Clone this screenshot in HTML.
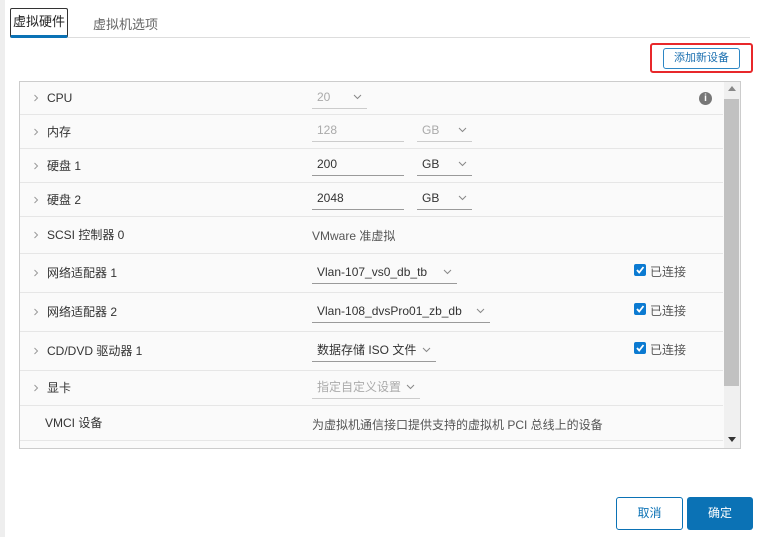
<!DOCTYPE html>
<html><head><meta charset="utf-8"><style>
*{box-sizing:border-box;margin:0;padding:0}
body{width:765px;height:537px;background:#fff;font-family:"Liberation Sans","Noto Sans CJK SC",sans-serif;font-size:12px;color:#333;position:relative;overflow:hidden}
.a{position:absolute}
.strip{left:0;top:0;width:5px;height:537px;background:#eeeeee}
.row{position:absolute;left:20px;width:703px;border-bottom:1px solid #e6e6e6;background:#fafafa}
.lbl{position:absolute;left:27px;top:50%;transform:translateY(-50%);white-space:nowrap;line-height:14px}
.chev{position:absolute;left:12px;top:50%;margin-top:-4px;width:8px;height:8px}
.fld{position:absolute;border-bottom:1px solid #9a9a9a;height:22px;line-height:20px;padding-left:5px;white-space:nowrap}
.dis{color:#aaa;border-bottom-color:#ccc}
.dd{position:absolute;right:5px;top:7px;width:9px;height:6px}
.cb{position:absolute;left:614px;width:12px;height:12px;background:#0b7ad1;border-radius:2px}
.cbl{position:absolute;left:630px;color:#555}
</style></head><body>
<svg width="0" height="0" style="position:absolute"><defs>
<symbol id="r" viewBox="0 0 8 8"><path d="M2.5 1 L5.5 4 L2.5 7" fill="none" stroke="#999" stroke-width="1"/></symbol>
<symbol id="d" viewBox="0 0 9 6"><path d="M1 1 L4.5 4.5 L8 1" fill="none" stroke="#888" stroke-width="1"/></symbol>
<symbol id="c" viewBox="0 0 12 12"><path d="M3 6 L5.2 8.5 L9.5 3" fill="none" stroke="#fff" stroke-width="1.8"/></symbol>
</defs></svg>
<div class="a strip"></div>
<div class="a" style="left:10px;top:8px;width:58px;height:30px;border:1px solid #333;border-radius:2px;border-bottom:3px solid #0b72b5;line-height:26px;text-align:center;font-size:13px;color:#222">虚拟硬件</div>
<div class="a" style="left:93px;top:14px;font-size:13px;color:#666">虚拟机选项</div>
<div class="a" style="left:68px;top:37px;width:682px;height:1px;background:#ddd"></div>
<div class="a" style="left:650px;top:43px;width:103px;height:30px;border:2px solid #e8282b;border-radius:3px"></div>
<div class="a" style="left:663px;top:48px;width:77px;height:21px;border:1px solid #2d86c4;border-radius:3px;line-height:19px;text-align:center;font-size:11px;color:#1a6fb0">添加新设备</div>
<div class="a" style="left:19px;top:81px;width:722px;height:368px;border:1px solid #ccc;background:#fafafa;overflow:hidden"></div>
<div class="row" style="top:82px;height:33px"><svg class="chev"><use href="#r"/></svg><span class="lbl">CPU</span>
<div class="fld dis" style="left:292px;top:5px;width:55px">20<svg class="dd"><use href="#d"/></svg></div>
<div class="a" style="left:679px;top:10px;width:13px;height:13px;border-radius:50%;background:#777;color:#fff;font-size:10px;font-weight:bold;text-align:center;line-height:13px">i</div></div>
<div class="row" style="top:115px;height:34px"><svg class="chev"><use href="#r"/></svg><span class="lbl">内存</span>
<div class="fld dis" style="left:292px;top:5px;width:92px">128</div>
<div class="fld dis" style="left:397px;top:5px;width:55px">GB<svg class="dd"><use href="#d"/></svg></div></div>
<div class="row" style="top:149px;height:34px"><svg class="chev"><use href="#r"/></svg><span class="lbl">硬盘 1</span>
<div class="fld" style="left:292px;top:5px;width:92px">200</div>
<div class="fld" style="left:397px;top:5px;width:55px">GB<svg class="dd"><use href="#d"/></svg></div></div>
<div class="row" style="top:183px;height:34px"><svg class="chev"><use href="#r"/></svg><span class="lbl">硬盘 2</span>
<div class="fld" style="left:292px;top:5px;width:92px">2048</div>
<div class="fld" style="left:397px;top:5px;width:55px">GB<svg class="dd"><use href="#d"/></svg></div></div>
<div class="row" style="top:217px;height:37px"><svg class="chev"><use href="#r"/></svg><span class="lbl">SCSI 控制器 0</span>
<div class="a" style="left:292px;top:10px;color:#555">VMware 准虚拟</div></div>
<div class="row" style="top:254px;height:39px"><svg class="chev"><use href="#r"/></svg><span class="lbl">网络适配器 1</span>
<div class="fld" style="left:292px;top:8px;width:145px">Vlan-107_vs0_db_tb<svg class="dd"><use href="#d"/></svg></div>
<svg class="cb" style="top:10px"><use href="#c"/></svg><div class="cbl" style="top:9px">已连接</div></div>
<div class="row" style="top:293px;height:39px"><svg class="chev"><use href="#r"/></svg><span class="lbl">网络适配器 2</span>
<div class="fld" style="left:292px;top:8px;width:178px">Vlan-108_dvsPro01_zb_db<svg class="dd"><use href="#d"/></svg></div>
<svg class="cb" style="top:10px"><use href="#c"/></svg><div class="cbl" style="top:9px">已连接</div></div>
<div class="row" style="top:332px;height:39px"><svg class="chev"><use href="#r"/></svg><span class="lbl">CD/DVD 驱动器 1</span>
<div class="fld" style="left:292px;top:8px;width:124px">数据存储 ISO 文件<svg class="dd"><use href="#d"/></svg></div>
<svg class="cb" style="top:10px"><use href="#c"/></svg><div class="cbl" style="top:9px">已连接</div></div>
<div class="row" style="top:371px;height:35px"><svg class="chev"><use href="#r"/></svg><span class="lbl">显卡</span>
<div class="fld dis" style="left:292px;top:6px;width:108px">指定自定义设置<svg class="dd"><use href="#d"/></svg></div></div>
<div class="row" style="top:406px;height:35px"><span class="lbl" style="left:25px">VMCI 设备</span>
<div class="a" style="left:292px;top:10px;color:#555">为虚拟机通信接口提供支持的虚拟机 PCI 总线上的设备</div></div>
<div class="a" style="left:724px;top:82px;width:16px;height:366px;background:#f0f0f0"></div>
<div class="a" style="left:724px;top:99px;width:15px;height:287px;background:#c1c1c1"></div>
<div class="a" style="left:728px;top:86px;width:0;height:0;border-left:4px solid transparent;border-right:4px solid transparent;border-bottom:5px solid #888"></div>
<div class="a" style="left:728px;top:437px;width:0;height:0;border-left:4px solid transparent;border-right:4px solid transparent;border-top:5px solid #333"></div>
<div class="a" style="left:616px;top:497px;width:67px;height:33px;border:1px solid #0b72b5;border-radius:3px;line-height:31px;text-align:center;color:#0b72b5;font-size:12px">取消</div>
<div class="a" style="left:687px;top:497px;width:66px;height:33px;background:#0b72b5;border-radius:3px;line-height:33px;text-align:center;color:#fff;font-size:12px">确定</div>
</body></html>
